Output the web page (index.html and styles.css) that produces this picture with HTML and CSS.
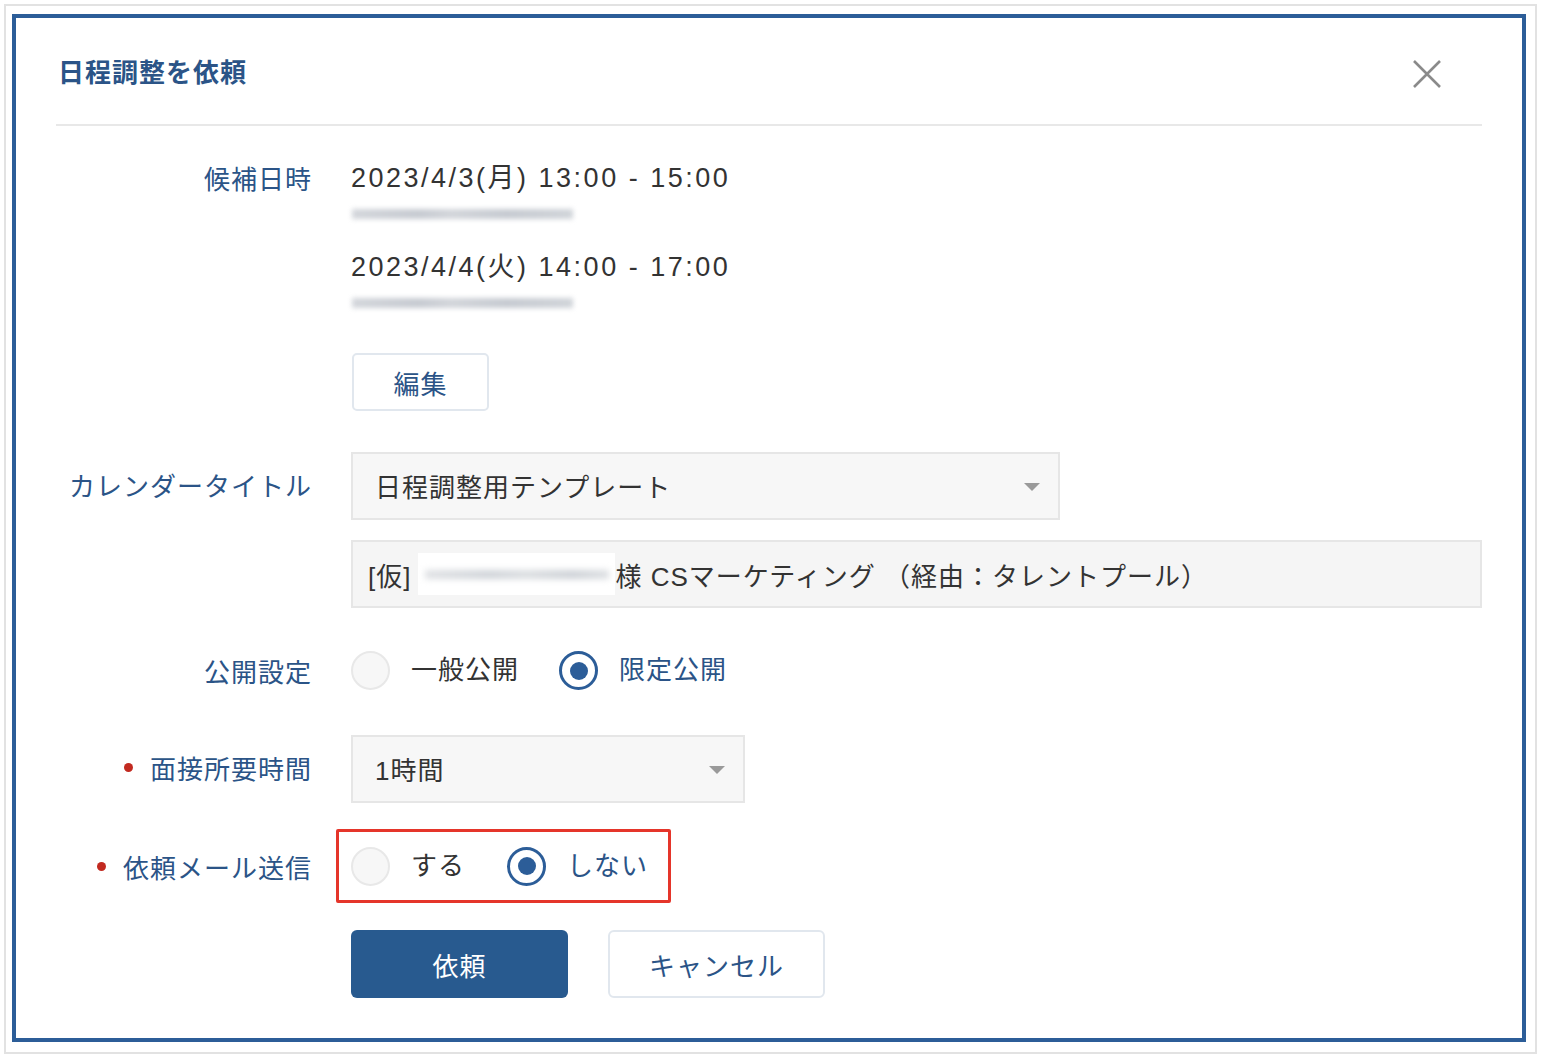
FILE: index.html
```html
<!DOCTYPE html>
<html lang="ja">
	<head>
		<meta charset="utf-8" />
		<title>日程調整を依頼</title>
		<link rel="stylesheet" href="styles.css">
	</head>
	<body>
		<div class="frame">
			<div class="dialog">
				<div class="dialog-header">
					<h1 class="dialog-title">日程調整を依頼</h1>
					<button class="close-btn" type="button" aria-label="閉じる">
						<svg width="30" height="30" viewBox="0 0 30 30">
							<path d="M2 2 L28 28 M28 2 L2 28" stroke="#8a8a8a" stroke-width="2.6" fill="none" />
						</svg>
					</button>
				</div>

				<div class="form">
					<div class="form-row">
						<div class="form-label label-dates">候補日時</div>
						<div class="form-field">
							<div class="slot">
								<div class="slot-time">2023/4/3(月) 13:00 - 15:00</div>
								<div class="blur-bar"></div>
							</div>
							<div class="slot">
								<div class="slot-time">2023/4/4(火) 14:00 - 17:00</div>
								<div class="blur-bar"></div>
							</div>
							<button class="btn btn-outline btn-edit" type="button">編集</button>
						</div>
					</div>

					<div class="form-row row-calendar">
						<div class="form-label label-control">カレンダータイトル</div>
						<div class="form-field">
							<div class="select select-wide">
								<span class="select-value">日程調整用テンプレート</span>
								<span class="select-arrow"></span>
							</div>
							<div class="text-input">
								<span>[仮]</span>
								<span class="masked"><span class="masked-bar"></span></span><span>様 CSマーケティング （経由：タレントプール）</span>
							</div>
						</div>
					</div>

					<div class="form-row row-visibility">
						<div class="form-label label-radio">公開設定</div>
						<div class="form-field radio-group">
							<span class="radio">
								<span class="radio-mark"></span>
								<span class="radio-text">一般公開</span>
							</span>
							<span class="radio is-checked">
								<span class="radio-mark"></span>
								<span class="radio-text">限定公開</span>
							</span>
						</div>
					</div>

					<div class="form-row row-duration">
						<div class="form-label label-control required">面接所要時間</div>
						<div class="form-field">
							<div class="select select-short">
								<span class="select-value">1時間</span>
								<span class="select-arrow"></span>
							</div>
						</div>
					</div>

					<div class="form-row row-mail">
						<div class="form-label label-mail required">依頼メール送信</div>
						<div class="form-field">
							<div class="radio-group highlight">
								<span class="radio">
									<span class="radio-mark"></span>
									<span class="radio-text">する</span>
								</span>
								<span class="radio is-checked">
									<span class="radio-mark"></span>
									<span class="radio-text">しない</span>
								</span>
							</div>
						</div>
					</div>

					<div class="form-row row-actions">
						<div class="form-label"></div>
						<div class="form-field actions">
							<button class="btn btn-primary" type="button">依頼</button>
							<button class="btn btn-outline" type="button">キャンセル</button>
						</div>
					</div>
				</div>
			</div>
		</div>
	</body>
</html>
```

FILE: styles.css
```css
body {
	margin: 0;
	background: #fff;
	font-family: "Liberation Sans", "Noto Sans CJK JP", sans-serif;
	font-size: 26px;
	letter-spacing: 1px;
	color: #333;
}

.frame {
	box-sizing: border-box;
	width: 1533px;
	height: 1050px;
	margin: 4px 0 0 4px;
	padding: 8px 9px 10px 6px;
	border: 2px solid #e2e2e2;
}
.dialog {
	box-sizing: border-box;
	height: 100%;
	padding: 0 40px;
	border: 4px solid #2c5d98;
	background: #fff;
}

.dialog-header {
	display: flex;
	align-items: center;
	justify-content: space-between;
	box-sizing: border-box;
	height: 108px;
	padding-top: 6px;
	border-bottom: 2px solid #e8e8e8;
}
.dialog-title {
	margin: -2px 0 0 2px;
	font-size: 26px;
	line-height: 36px;
	font-weight: bold;
	color: #2b5487;
}
.close-btn {
	width: 30px;
	height: 30px;
	padding: 0;
	margin-right: 40px;
	border: 0;
	background: none;
}
.close-btn svg {
	display: block;
}

.form {
	padding-top: 34px;
}
.form-row {
	display: grid;
	grid-template-columns: 255px 1fr;
	column-gap: 40px;
	align-items: start;
}
.form-label {
	display: flex;
	align-items: center;
	justify-content: flex-end;
	color: #2b5487;
	white-space: nowrap;
	letter-spacing: 1px;
	margin-right: -1px;
}
.label-dates { height: 34px; }
.label-control { height: 64px; }
.label-radio { height: 39px; }
.label-mail { height: 74px; }
.required::before {
	content: "";
	width: 9px;
	height: 9px;
	margin-right: 17px;
	border-radius: 50%;
	background: #c22a20;
}

.form-field {
	min-width: 0;
}

.slot {
	margin-bottom: 30px;
}
.slot + .slot {
	margin-bottom: 45px;
}
.slot-time {
	height: 36px;
	font-size: 27px;
	line-height: 36px;
	letter-spacing: 2.5px;
}
.blur-bar {
	width: 221px;
	height: 10px;
	margin-top: 13px;
	margin-left: 1px;
	background: linear-gradient(90deg, #d3d6db 0%, #c6cad1 30%, #d2d5da 45%, #c6cad1 70%, #d0d4d9 100%);
	filter: blur(2.5px);
}

.btn {
	box-sizing: border-box;
	height: 68px;
	width: 217px;
	border-radius: 6px;
	font-family: inherit;
	font-size: 26px;
	letter-spacing: 1px;
	cursor: pointer;
}
.btn-primary {
	border: 0;
	background: #285a8f;
	color: #fff;
}
.btn-outline {
	border: 2px solid #e1e7ee;
	background: #fff;
	color: #2b5487;
}
.btn-edit {
	display: block;
	width: 137px;
	height: 58px;
	margin-left: 1px;
	border-radius: 5px;
}

.row-calendar { margin-top: 41px; }
.row-visibility { margin-top: 43px; }
.row-duration { margin-top: 45px; }
.row-mail { margin-top: 26px; }
.row-actions { margin-top: 27px; }

.select {
	position: relative;
	box-sizing: border-box;
	height: 68px;
	padding: 4px 22px 0;
	border: 2px solid #e6e6e6;
	background: #f7f7f7;
	line-height: 60px;
	white-space: nowrap;
}
.select-wide { width: 709px; }
.select-short { width: 394px; }
.select-arrow {
	position: absolute;
	right: 18px;
	top: 29px;
	width: 0;
	height: 0;
	border-left: 8px solid transparent;
	border-right: 8px solid transparent;
	border-top: 8px solid #9a9a9a;
}

.text-input {
	display: flex;
	align-items: center;
	box-sizing: border-box;
	height: 68px;
	margin-top: 20px;
	padding: 0 15px;
	border: 2px solid #e6e6e6;
	background: #f5f5f5;
	white-space: pre;
}
.masked {
	display: flex;
	align-items: center;
	justify-content: center;
	width: 197px;
	height: 42px;
	margin-left: 7px;
	background: #fff;
}
.masked-bar {
	width: 184px;
	height: 9px;
	background: linear-gradient(90deg, #dfe1e4 0%, #cfd3d8 35%, #dadde0 55%, #cdd1d6 80%, #dcdfe2 100%);
	filter: blur(3px);
}

.radio-group {
	display: flex;
	align-items: center;
	height: 39px;
}
.radio {
	display: flex;
	align-items: center;
	margin-right: 40px;
}
.radio-mark {
	box-sizing: border-box;
	width: 39px;
	height: 39px;
	margin-right: 21px;
	border: 2px solid #e8e8e8;
	border-radius: 50%;
	background: #f7f7f7;
}
.radio-text {
	line-height: 39px;
}
.radio.is-checked .radio-mark {
	display: flex;
	align-items: center;
	justify-content: center;
	border: 3px solid #2c5d98;
	background: #fff;
}
.radio.is-checked .radio-mark::after {
	content: "";
	width: 18px;
	height: 18px;
	border-radius: 50%;
	background: #2c5d98;
}
.radio.is-checked .radio-text {
	color: #2b5487;
}

.highlight {
	box-sizing: border-box;
	width: 335px;
	height: 74px;
	margin-left: -15px;
	padding-left: 12px;
	border: 3px solid #e5352a;
	border-radius: 2px;
}
.highlight .radio {
	margin-right: 42px;
}
.highlight .radio:last-child,
.row-visibility .radio:last-child {
	margin-right: 0;
}

.actions {
	display: flex;
	gap: 40px;
}
```
